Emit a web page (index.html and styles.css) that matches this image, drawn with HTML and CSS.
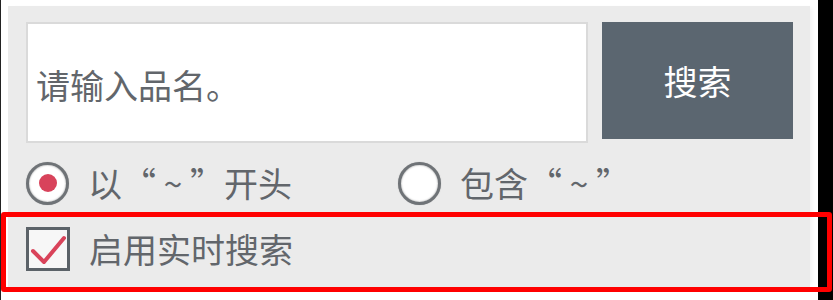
FILE: index.html
```html
<!DOCTYPE html>
<html lang="zh-CN">
<head>
<meta charset="utf-8">
<link rel="stylesheet" href="styles.css">
</head>
<body>
<div class="edge-left"></div>
<div class="canvas">
  <div class="panel">
    <div class="search-row">
      <div class="search-input">请输入品名。</div>
      <div class="search-btn">搜索</div>
    </div>
    <div class="radio-row">
      <div class="radio-opt first">
        <span class="radio checked"><span class="dot"></span></span>
        <span class="label">以“<span class="tilde">~</span>”开头</span>
      </div>
      <div class="radio-opt">
        <span class="radio"></span>
        <span class="label">包含“<span class="tilde">~</span>”</span>
      </div>
    </div>
    <div class="check-row">
      <span class="checkbox">
        <svg width="38" height="38" viewBox="0 0 38 38"><path d="M4 21 L15 32 L35 8" fill="none" stroke="#d9435a" stroke-width="4" stroke-linecap="round" stroke-linejoin="round"/></svg>
      </span>
      <span class="label">启用实时搜索</span>
    </div>
  </div>
</div>
<div class="edge-right"></div>
<div class="highlight"></div>
</body>
</html>
```
FILE: styles.css
```css
html, body {
  margin: 0;
  padding: 0;
}
body {
  width: 833px;
  height: 300px;
  display: flex;
  background: #ffffff;
  font-family: "Noto Sans CJK SC", "Noto Sans", sans-serif;
  position: relative;
  overflow: hidden;
}
.edge-left {
  width: 1px;
  background: #222;
}
.canvas {
  width: 817px;
  padding: 6px 0 0 7px;
  box-sizing: border-box;
}
.edge-right {
  width: 15px;
  background: #000;
}
.panel {
  width: 802px;
  height: 281px;
  background: #ebebeb;
  box-shadow: 4px 0 4px -2px #f3f3f3;
  padding: 16px 0 0 18px;
  box-sizing: border-box;
  display: flex;
  flex-direction: column;
}
.search-row {
  display: flex;
  align-items: flex-start;
}
.search-input {
  width: 562px;
  height: 121px;
  box-sizing: border-box;
  border: 2px solid #dadada;
  background: #fff;
  display: flex;
  align-items: center;
  padding-left: 8px;
  padding-top: 4px;
  font-size: 34px;
  color: #62666b;
}
.search-btn {
  margin-left: 14px;
  width: 191px;
  height: 117px;
  background: #5b6670;
  color: #fff;
  font-size: 34px;
  display: flex;
  align-items: center;
  justify-content: center;
}
.radio-row {
  margin-top: 19px;
  display: flex;
  height: 42px;
  align-items: center;
}
.radio-opt {
  display: flex;
  align-items: center;
}
.radio-opt.first {
  width: 372px;
}
.radio {
  width: 43px;
  height: 43px;
  box-sizing: border-box;
  border-radius: 50%;
  border: 3px solid #6f7377;
  box-shadow: inset 0 0 2px #999, 0 0 1px #aaa;
  background: #fff;
  display: flex;
  align-items: center;
  justify-content: center;
}
.dot {
  width: 18px;
  height: 18px;
  border-radius: 50%;
  background: #d8435b;
}
.label {
  margin-left: 19px;
  font-size: 34px;
  color: #62666b;
  line-height: 42px;
}
.tilde {
  display: inline-block;
  width: 34px;
  text-align: center;
}
.check-row {
  margin-top: 23px;
  display: flex;
  align-items: center;
  height: 44px;
}
.checkbox {
  width: 44px;
  height: 44px;
  box-sizing: border-box;
  border: 3px solid #5b6268;
  background: #f7f7f7;
  display: flex;
  align-items: center;
  justify-content: center;
}
.highlight {
  position: absolute;
  left: 1px;
  top: 212px;
  width: 831px;
  height: 80px;
  box-sizing: border-box;
  border: 5px solid #ff0000;
  border-radius: 3px;
}
```
